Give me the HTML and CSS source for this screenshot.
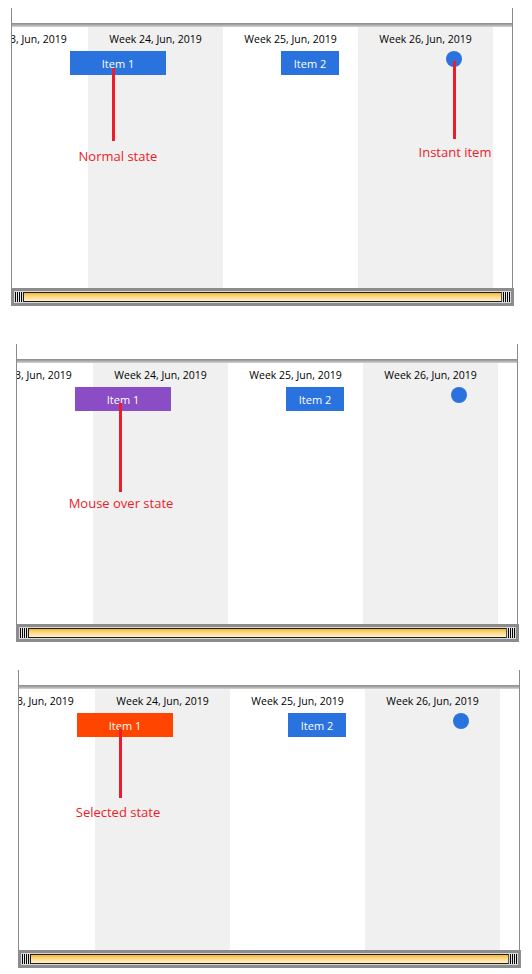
FILE: index.html
```html
<!DOCTYPE html>
<html>
<head>
<meta charset="utf-8">
<link rel="stylesheet" href="styles.css">
</head>
<body>
<div class="page">

  <div class="tl tl-1">
    <div class="tl-top"></div>
    <div class="tl-rule"></div>
    <div class="tl-canvas">
      <div class="weeks">
        <div class="week"><span class="wlabel">Week 23, Jun, 2019</span></div>
        <div class="week shade"><span class="wlabel">Week 24, Jun, 2019</span></div>
        <div class="week"><span class="wlabel">Week 25, Jun, 2019</span></div>
        <div class="week shade"><span class="wlabel">Week 26, Jun, 2019</span></div>
        <div class="week"></div>
      </div>
      <div class="item item-1 st-normal">Item 1</div>
      <div class="item item-2">Item 2</div>
      <div class="instant"></div>
      <div class="stem stem-1a"></div>
      <div class="note note-1a">Normal state</div>
      <div class="stem stem-1b"></div>
      <div class="note note-1b">Instant item</div>
    </div>
    <div class="scroll">
      <div class="grip"></div>
      <div class="thumb"></div>
      <div class="grip"></div>
    </div>
  </div>

  <div class="tl tl-2">
    <div class="tl-top"></div>
    <div class="tl-rule"></div>
    <div class="tl-canvas">
      <div class="weeks">
        <div class="week"><span class="wlabel">Week 23, Jun, 2019</span></div>
        <div class="week shade"><span class="wlabel">Week 24, Jun, 2019</span></div>
        <div class="week"><span class="wlabel">Week 25, Jun, 2019</span></div>
        <div class="week shade"><span class="wlabel">Week 26, Jun, 2019</span></div>
        <div class="week"></div>
      </div>
      <div class="item item-1 st-hover">Item 1</div>
      <div class="item item-2">Item 2</div>
      <div class="instant"></div>
      <div class="stem stem-2"></div>
      <div class="note note-2">Mouse over state</div>
    </div>
    <div class="scroll">
      <div class="grip"></div>
      <div class="thumb"></div>
      <div class="grip"></div>
    </div>
  </div>

  <div class="tl tl-3">
    <div class="tl-top"></div>
    <div class="tl-rule"></div>
    <div class="tl-canvas">
      <div class="weeks">
        <div class="week"><span class="wlabel">Week 23, Jun, 2019</span></div>
        <div class="week shade"><span class="wlabel">Week 24, Jun, 2019</span></div>
        <div class="week"><span class="wlabel">Week 25, Jun, 2019</span></div>
        <div class="week shade"><span class="wlabel">Week 26, Jun, 2019</span></div>
        <div class="week"></div>
      </div>
      <div class="item item-1 st-selected">Item 1</div>
      <div class="item item-2">Item 2</div>
      <div class="instant"></div>
      <div class="stem stem-3"></div>
      <div class="note note-3">Selected state</div>
    </div>
    <div class="scroll">
      <div class="grip"></div>
      <div class="thumb"></div>
      <div class="grip"></div>
    </div>
  </div>

</div>
</body>
</html>
```
FILE: styles.css
```css
* { box-sizing: border-box; }
html, body { margin: 0; padding: 0; background: #ffffff; }
body {
  font-family: "Open Sans", "Noto Sans", "Liberation Sans", sans-serif;
  font-size: 11px;
  color: #000;
}
.page {
  display: flex;
  flex-direction: column;
  align-items: flex-start;
  padding-top: 8px;
}

.tl {
  width: 502px;
  display: flex;
  flex-direction: column;
  border-left: 1px solid #8a8a8a;
  border-right: 1px solid #8a8a8a;
}
.tl-1 { margin-left: 11px; }
.tl-2 { margin-left: 16px; margin-top: 38px; }
.tl-3 { margin-left: 18px; margin-top: 28px; }

.tl-top { height: 15px; background: #fff; }
.tl-rule {
  height: 4px;
  background: linear-gradient(#8c8c8c, #a9a9a9 50%, #d6d6d6);
}

.tl-canvas {
  position: relative;
  height: 261px;
  overflow: hidden;
}
.weeks {
  display: flex;
  height: 100%;
  margin-left: -59px;
}
.week {
  flex: 0 0 135px;
  height: 100%;
  display: flex;
  justify-content: center;
  padding-top: 4px;
}
.week.shade { background: #f0f0f0; }
.wlabel {
  white-space: nowrap;
  font-size: 10.5px;
  line-height: 16px;
  height: 16px;
}

.item {
  position: absolute;
  top: 24px;
  height: 24px;
  color: #fff;
  display: flex;
  align-items: center;
  justify-content: center;
  font-size: 11px;
  background: #2a73de;
}
.item-1 { left: 58px; width: 96px; }
.item-2 { left: 269px; width: 58px; }
.st-normal { background: #2a73de; }
.st-hover { background: #8a4dc6; }
.st-selected { background: #ff4500; }

.instant {
  position: absolute;
  left: 434px;
  top: 24px;
  width: 16px;
  height: 16px;
  border-radius: 50%;
  background: #2a73de;
}

.stem {
  position: absolute;
  width: 3px;
  background: #ed1c2a;
}
.stem-1a { left: 100px; top: 41px; height: 73px; }
.stem-1b { left: 441px; top: 34px; height: 78px; }
.stem-2 { left: 102px; top: 40px; height: 89px; }
.stem-3 { left: 100px; top: 40px; height: 69px; }

.note {
  position: absolute;
  color: #ed1c2a;
  font-size: 13px;
  white-space: nowrap;
  line-height: 16px;
  transform: translateX(-50%);
}
.note-1a { left: 106px; top: 121px; }
.note-1b { left: 443px; top: 117px; }
.note-2 { left: 104px; top: 132px; }
.note-3 { left: 99px; top: 115px; }

.scroll {
  height: 18px;
  margin-left: -1px;
  margin-right: -2px;
  border: 3px solid #8c8c8c;
  background: #d9d9d9;
  display: flex;
  align-items: stretch;
  padding: 1px 1px;
}
.grip {
  flex: 0 0 7px;
  background: repeating-linear-gradient(90deg, #000 0 1px, #e8e8e8 1px 2px);
}
.thumb {
  flex: 1;
  margin: 0 1px;
  border: 1px solid #1e1e1e;
  border-right-color: #555;
  background: linear-gradient(#f7b52c, #fdd680 40%, #fff0cc);
}
```
